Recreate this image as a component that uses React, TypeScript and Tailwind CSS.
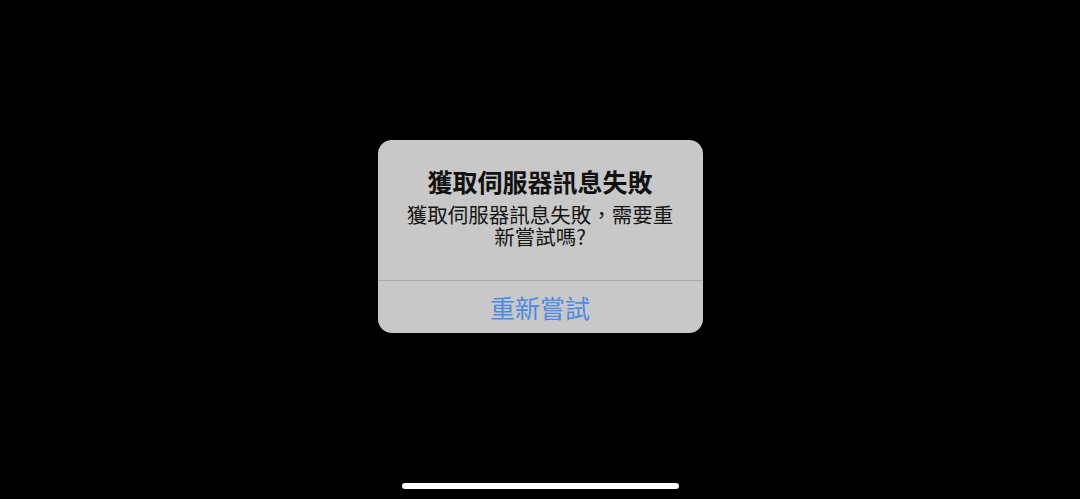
export default function App() {
  return (
    <div
      className="relative flex h-[499px] w-full flex-col items-center bg-black"
      style={{ fontFamily: '"Noto Sans CJK TC", "Noto Sans", sans-serif' }}
    >
      {/* 提示框 */}
      <div className="mt-[140px] flex w-[325px] flex-col overflow-hidden rounded-[14px] bg-[#c8c8c8]">
        <div className="flex flex-col items-center px-[24px] pb-[33px] pt-[26px] text-center">
          <h1 className="text-[25px] font-bold leading-[30px] text-[#111111]">獲取伺服器訊息失敗</h1>
          <p className="mt-[7px] text-[20.5px] leading-[22px] text-[#151515]">
            獲取伺服器訊息失敗，需要重新嘗試嗎?
          </p>
        </div>
        <div className="h-px bg-[#a9a9a9]" />
        <button className="flex h-[52px] items-center justify-center text-[25px] leading-none text-[#4a8be6]">
          重新嘗試
        </button>
      </div>

      {/* 底部指示條 */}
      <div className="mb-[10px] mt-auto h-[6px] w-[277px] rounded-full bg-white" />
    </div>
  );
}
